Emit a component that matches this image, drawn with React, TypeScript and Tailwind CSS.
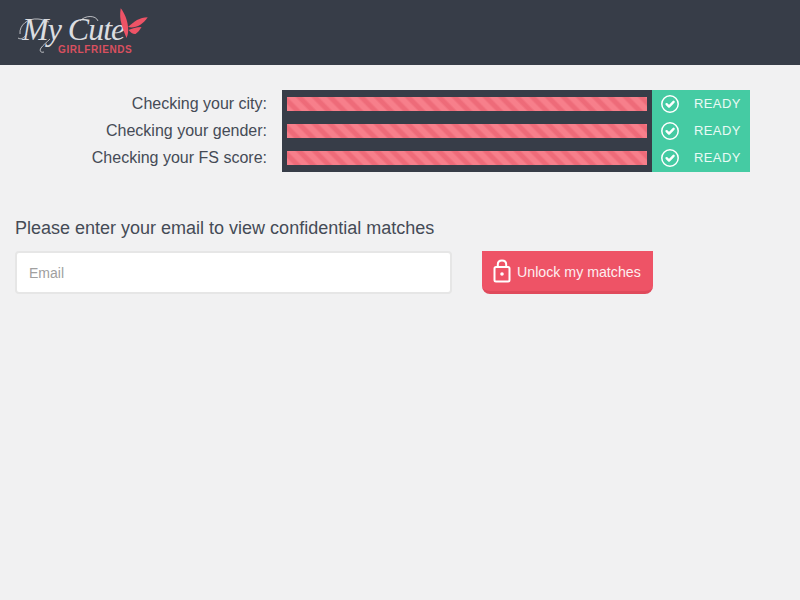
import { Fragment } from "react";

const checks = ["Checking your city:", "Checking your gender:", "Checking your FS score:"];

function CheckIcon() {
  return (
    <svg width="20" height="20" viewBox="0 0 20 20" fill="none">
      <circle cx="10" cy="10" r="8.2" stroke="#fff" strokeWidth="1.5" />
      <path d="M6.6 10.2l2.4 2.4 4.6-4.8" stroke="#fff" strokeWidth="2.4" strokeLinecap="round" strokeLinejoin="round" />
    </svg>
  );
}

function LockIcon() {
  return (
    <svg width="18" height="24" viewBox="0 0 18 24" fill="none">
      <path d="M4.800 8V5.500C4.800 3 6.700 1.500 9 1.500s4.200 1.500 4.200 4V6.500" stroke="#fff" strokeWidth="2" strokeLinecap="round" />
      <rect x="1.500" y="8" width="15" height="14.500" rx="1.500" stroke="#fff" strokeWidth="2" />
      <circle cx="9" cy="15" r="1.800" fill="#fff" />
    </svg>
  );
}

function Logo() {
  return (
    <div className="relative w-[135px] h-[50px]">
      <span className="absolute left-[4px] top-[11px] whitespace-nowrap text-[32px] leading-[29px] italic tracking-[-1px] text-[#dcdde0] font-['Liberation_Serif',serif]">
        My Cute
      </span>
      <span className="absolute left-[40px] top-[40px] whitespace-nowrap text-[10px] leading-[12px] font-bold tracking-[0.6px] text-[#d9505f] font-['Liberation_Sans',sans-serif]">
        GIRLFRIENDS
      </span>
      {/* flourishes round the wordmark */}
      <svg className="absolute left-0 top-[4px]" width="110" height="46" viewBox="0 0 110 46" fill="none" stroke="#dcdde0" strokeWidth="0.8">
        <path d="M2 26C1 17 10 10 20 11c6 .5 9 3 11 3" />
        <path d="M0 30c3 2 6 0 9-4" />
        <path d="M26 44c-3 1-5-1-3-4 2-3 6-6 9-9" />
        <path d="M62 13c5-6 16-6 18 0" />
      </svg>
      <svg className="absolute left-[100px] top-[4px]" width="32" height="34" viewBox="0 0 32 34" fill="#ee5366">
        <path d="M2.700.3C1.800 6 2 11 3.500 16c1 4 2.500 8 5 14 1.500-3 2-7 1.500-11C9.500 12 6.500 5 2.700.3z" />
        <path d="M10 19c3-3 6-5 9-7 3-1.500 7-2.500 10.700-2.700-2 3-4.500 5.800-7.700 7.700-3.500 2-8 3-12 2z" />
        <path d="M10.500 22c3-1.500 8-3 13-3-1.500 3-3.500 5-6 7-2 .5-5-1.500-7-4z" />
      </svg>
    </div>
  );
}

export default function App() {
  return (
    <div className="min-h-[600px] bg-[#f1f1f2] font-['Liberation_Sans',sans-serif] text-[#454b56]">
      <header className="h-[65px] bg-[#373d48] pl-[18px] pt-[4px]">
        <Logo />
      </header>

      <div className="pl-[15px] pt-[25px]">
        <div className="grid grid-cols-[267px_370px_98px] w-[735px]">
          {checks.map((label, i) => (
            <Fragment key={label}>
              <div className="flex h-[27px] items-center justify-end pr-[15px] text-[16px]">{label}</div>
              <div className={`flex items-center bg-[#373d48] px-[5px] ${i === 2 ? "h-[28px] pb-px" : "h-[27px]"}`}>
                <div className="h-[14px] w-full bg-[repeating-linear-gradient(45deg,#f77f8b_0px,#f77f8b_4px,#ee6b79_6px,#ee6b79_9px,#f77f8b_11px)]" />
              </div>
              <div className={`flex items-center bg-[#45cba3] pl-[8px] text-white ${i === 2 ? "h-[28px] pb-px" : "h-[27px]"}`}>
                <CheckIcon />
                <span className="ml-[14px] text-[13px] tracking-[0.4px] text-[#eafaf5]">READY</span>
              </div>
            </Fragment>
          ))}
        </div>

        <p className="mt-[45px] text-[18px] leading-[22px]">Please enter your email to view confidential matches</p>

        <div className="mt-[12px] flex items-start gap-[30px]">
          <input
            type="text"
            placeholder="Email"
            className="h-[43px] w-[437px] rounded-[4px] border-2 border-[#e6e6e6] bg-white px-[12px] text-[14px] placeholder:text-[#a0a0a0] outline-none"
          />
          <button className="flex h-[43px] w-[171px] items-center rounded-b-[8px] border-b-[3px] border-[#e04a5c] bg-[#ee5366] pl-[11px] text-[14.2px] text-[#fdeef0]">
            <LockIcon />
            <span className="ml-[6px] pt-[3px]">Unlock my matches</span>
          </button>
        </div>
      </div>
    </div>
  );
}
